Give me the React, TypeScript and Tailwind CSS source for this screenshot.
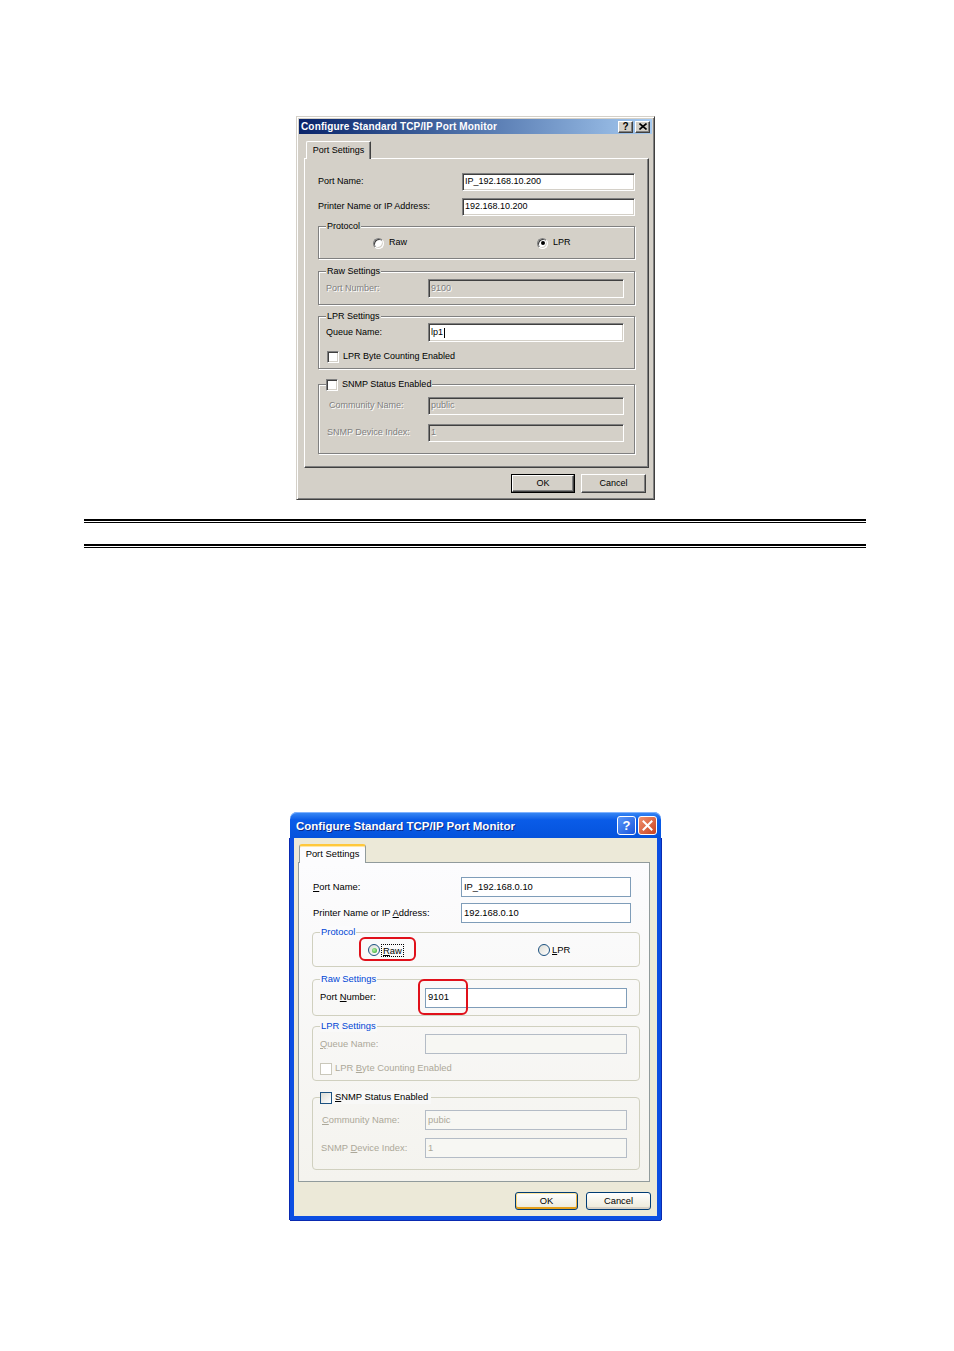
import React from "react";

const raised =
  "border border-t-white border-l-white border-r-[#404040] border-b-[#404040] shadow-[inset_-1px_-1px_0_#808080,inset_1px_1px_0_#d4d0c8]";
const sunken =
  "border border-t-[#808080] border-l-[#808080] border-r-white border-b-white shadow-[inset_1px_1px_0_#404040,inset_-1px_-1px_0_#d4d0c8]";
const etched = "border border-[#808080] shadow-[inset_1px_1px_0_#fff,1px_1px_0_#fff]";
const disabledTxt = "text-[#808080] [text-shadow:1px_1px_0_#fff]";

function ClassicRadio({ checked }: { checked?: boolean }) {
  return (
    <span className="w-[11px] h-[11px] rounded-full bg-white border border-t-[#808080] border-l-[#808080] border-r-white border-b-white shadow-[inset_1px_1px_0_#404040,inset_-1px_-1px_0_#d4d0c8] flex items-center justify-center shrink-0">
      {checked && <span className="w-[4px] h-[4px] rounded-full bg-black" />}
    </span>
  );
}

function ClassicCheck() {
  return <span className={`w-[12px] h-[12px] bg-white shrink-0 ${sunken}`} />;
}

function ClassicDialog() {
  return (
    <div
      className={`w-[359px] h-[384px] bg-[#d4d0c8] p-[2px] flex flex-col border border-t-[#d4d0c8] border-l-[#d4d0c8] border-r-[#404040] border-b-[#404040] shadow-[inset_1px_1px_0_#fff,inset_-1px_-1px_0_#808080] text-[9px] text-black`}
    >
      {/* title bar */}
      <div className="h-[15px] bg-linear-to-r from-[#0a246a] to-[#a6caf0] flex items-center pl-[2px] pr-[2px]">
        <span className="text-white font-bold text-[10px] tracking-[0.15px] leading-none">
          Configure Standard TCP/IP Port Monitor
        </span>
        <div className="ml-auto flex items-center gap-[2px]">
          <span className={`w-[15px] h-[12px] bg-[#d4d0c8] flex items-center justify-center text-[10px] font-bold leading-none ${raised}`}>
            ?
          </span>
          <span className={`w-[15px] h-[12px] bg-[#d4d0c8] flex items-center justify-center ${raised}`}>
            <svg width="8" height="7" viewBox="0 0 8 7">
              <path d="M0.5 0.5 L7.5 6.5 M7.5 0.5 L0.5 6.5" stroke="#000" strokeWidth="1.6" />
            </svg>
          </span>
        </div>
      </div>

      {/* tab */}
      <div className="flex pl-[7px] mt-[7px] relative z-10">
        <div className="w-[65px] h-[18px] -mb-px bg-[#d4d0c8] border-t border-l border-t-white border-l-white border-r border-r-[#404040] shadow-[inset_-1px_0_0_#808080] rounded-tl-[2px] rounded-tr-[1px] flex items-center justify-center">
          Port Settings
        </div>
      </div>

      {/* panel */}
      <div className="ml-[5px] w-[345px] h-[310px] border border-t-white border-l-white border-r-[#404040] border-b-[#404040] shadow-[inset_-1px_-1px_0_#808080] pl-[13px] pt-[14px] flex flex-col">
        <div className="flex items-center h-[18px]">
          <span className="w-[144px]">Port Name:</span>
          <span className={`w-[173px] h-[18px] bg-white flex items-center pl-[2px] ${sunken}`}>IP_192.168.10.200</span>
        </div>
        <div className="flex items-center h-[18px] mt-[7px]">
          <span className="w-[144px]">Printer Name or IP Address:</span>
          <span className={`w-[173px] h-[18px] bg-white flex items-center pl-[2px] ${sunken}`}>192.168.10.200</span>
        </div>

        {/* Protocol */}
        <div className={`relative w-[317px] h-[33px] mt-[10px] ${etched}`}>
          <span className="absolute left-[7px] -top-[7px] px-[1px] bg-[#d4d0c8] leading-[12px]">Protocol</span>
          <div className="flex items-center h-full pl-[54px] pt-[1px]">
            <div className="w-[164px] flex items-center gap-[5px]">
              <ClassicRadio />
              <span>Raw</span>
            </div>
            <div className="flex items-center gap-[5px]">
              <ClassicRadio checked />
              <span>LPR</span>
            </div>
          </div>
        </div>

        {/* Raw settings */}
        <div className={`relative w-[317px] h-[34px] mt-[12px] ${etched}`}>
          <span className="absolute left-[7px] -top-[7px] px-[1px] bg-[#d4d0c8] leading-[12px]">Raw Settings</span>
          <div className="flex items-center h-full pl-[7px] pt-[1px]">
            <span className={`w-[102px] ${disabledTxt}`}>Port Number:</span>
            <span className={`w-[196px] h-[19px] bg-[#d4d0c8] flex items-center pl-[2px] ${sunken} ${disabledTxt}`}>9100</span>
          </div>
        </div>

        {/* LPR settings */}
        <div className={`relative w-[317px] h-[53px] mt-[11px] ${etched}`}>
          <span className="absolute left-[7px] -top-[7px] px-[1px] bg-[#d4d0c8] leading-[12px]">LPR Settings</span>
          <div className="flex flex-col pl-[7px] pt-[6px]">
            <div className="flex items-center h-[19px]">
              <span className="w-[102px]">Queue Name:</span>
              <span className={`w-[196px] h-[19px] bg-white flex items-center pl-[2px] ${sunken}`}>
                lp1<span className="ml-[1px] w-px h-[10px] bg-black" />
              </span>
            </div>
            <div className="flex items-center gap-[4px] mt-[8px] h-[13px] pl-[1px]">
              <ClassicCheck />
              <span>LPR Byte Counting Enabled</span>
            </div>
          </div>
        </div>

        {/* SNMP */}
        <div className={`relative w-[317px] h-[70px] mt-[15px] ${etched}`}>
          <span className="absolute left-[7px] -top-[7px] pr-[1px] bg-[#d4d0c8] flex items-center gap-[4px] h-[13px]">
            <ClassicCheck />
            <span>SNMP Status Enabled</span>
          </span>
          <div className="flex flex-col pl-[7px] pt-[12px]">
            <div className="flex items-center h-[18px]">
              <span className={`w-[102px] pl-[3px] ${disabledTxt}`}>Community Name:</span>
              <span className={`w-[196px] h-[18px] bg-[#d4d0c8] flex items-center pl-[2px] ${sunken} ${disabledTxt}`}>public</span>
            </div>
            <div className="flex items-center h-[18px] mt-[9px]">
              <span className={`w-[102px] pl-[1px] ${disabledTxt}`}>SNMP Device Index:</span>
              <span className={`w-[196px] h-[18px] bg-[#d4d0c8] flex items-center pl-[2px] ${sunken} ${disabledTxt}`}>1</span>
            </div>
          </div>
        </div>
      </div>

      {/* buttons */}
      <div className="flex justify-end gap-[6px] mt-[6px] pr-[6px]">
        <div className="border border-black">
          <div className={`w-[62px] h-[17px] bg-[#d4d0c8] flex items-center justify-center ${raised}`}>OK</div>
        </div>
        <div className={`w-[65px] h-[19px] bg-[#d4d0c8] flex items-center justify-center ${raised}`}>Cancel</div>
      </div>
    </div>
  );
}

function DoubleLine() {
  return (
    <div className="ml-[84px] w-[782px]">
      <div className="h-[2px] bg-black" />
      <div className="h-px mt-px bg-black" />
    </div>
  );
}

const xpDis = "text-[#aca899]";
const U = ({ children }: { children: React.ReactNode }) => <span className="underline">{children}</span>;

function XPRadio({ checked }: { checked?: boolean }) {
  return (
    <span className="w-[12px] h-[12px] rounded-full border border-[#1c5180] bg-linear-to-br from-[#dcdcd5] to-white flex items-center justify-center shrink-0">
      {checked && (
        <span className="w-[5px] h-[5px] rounded-full bg-[radial-gradient(circle_at_40%_40%,#b6f1a6,#21a121)]" />
      )}
    </span>
  );
}

function XPCheck({ disabled }: { disabled?: boolean }) {
  return disabled ? (
    <span className="w-[12px] h-[12px] border border-[#cac8bb] bg-white shrink-0" />
  ) : (
    <span className="w-[12px] h-[12px] border border-[#1c5180] bg-linear-to-br from-[#dcdcd5] to-white shrink-0" />
  );
}

const xpGroup = "relative w-[328px] border border-[#d0d0bf] rounded-[4px]";
const xpInput = "bg-white border border-[#7f9db9] flex items-center pl-[2px]";
const xpInputDis = "bg-[#f7f7f3] border border-[#b4bcc6] flex items-center pl-[2px] text-[#aca899]";

function XPDialog() {
  return (
    <div className="w-[371px] h-[408px] flex flex-col text-[9.4px] text-black">
      {/* title */}
      <div className="h-[26px] rounded-t-[7px] bg-linear-to-b from-[#3b8bf5] via-[#0a5ce8] via-30% to-[#0553dc] flex items-center pl-[6px] pr-[4px] shadow-[inset_0_1px_0_#7fb2ff]">
        <span className="text-white font-bold text-[11.5px] leading-none pt-[3px] [text-shadow:1px_1px_0_#0a2a8a]">
          Configure Standard TCP/IP Port Monitor
        </span>
        <div className="ml-auto flex items-center gap-[2px] pt-[1px]">
          <span className="w-[19px] h-[19px] rounded-[3px] border border-white bg-linear-to-br from-[#5a96f8] to-[#1a54dc] flex items-center justify-center text-white font-bold text-[13px] leading-none">
            ?
          </span>
          <span className="w-[19px] h-[19px] rounded-[3px] border border-white bg-linear-to-br from-[#f0906c] to-[#c8401e] flex items-center justify-center">
            <svg width="11" height="11" viewBox="0 0 11 11">
              <path d="M1.5 1.5 L9.5 9.5 M9.5 1.5 L1.5 9.5" stroke="#fff" strokeWidth="2" strokeLinecap="square" />
            </svg>
          </span>
        </div>
      </div>

      {/* body */}
      <div className="flex-1 bg-[#ece9d8] border-x-[4px] border-b-[4px] border-[#0b4ee2] shadow-[-1px_0_0_#0a2ab0,1px_0_0_#0a2ab0,0_1px_0_#0a2ab0] flex flex-col pt-[6px]">
        <div className="flex pl-[5px] relative z-10">
          <div className="w-[67px] h-[19px] -mb-px bg-[#fcfcfe] border-x border-[#919b9c] rounded-t-[3px] border-t-[2px] border-t-[#ffc83c] shadow-[inset_0_1px_0_#ffe7a2] flex items-center justify-center">
            Port Settings
          </div>
        </div>

        <div className="ml-[4px] w-[352px] h-[320px] border border-[#919b9c] bg-linear-to-b from-[#fcfcfe] to-[#f4f3ee] pl-[13px] pt-[14px] flex flex-col">
          <div className="flex items-center h-[20px] pl-[1px]">
            <span className="w-[148px]">
              <U>P</U>ort Name:
            </span>
            <span className={`w-[170px] h-[20px] ${xpInput}`}>IP_192.168.0.10</span>
          </div>
          <div className="flex items-center h-[20px] pl-[1px] mt-[6px]">
            <span className="w-[148px]">
              Printer Name or IP <U>A</U>ddress:
            </span>
            <span className={`w-[170px] h-[20px] ${xpInput}`}>192.168.0.10</span>
          </div>

          {/* Protocol */}
          <div className={`${xpGroup} h-[35px] mt-[9px]`}>
            <span className="absolute left-[7px] -top-[7px] px-[1px] bg-[#fbfbfc] text-[#0046d5] leading-[12px]">Protocol</span>
            <div className="flex items-center h-full pl-[55px] pt-[1px]">
              <div className="w-[170px] flex items-center gap-[2px]">
                <XPRadio checked />
                <span className="outline outline-1 outline-dotted outline-black px-[1px] leading-[11px]">
                  <U>R</U>aw
                </span>
              </div>
              <div className="flex items-center gap-[2px]">
                <XPRadio />
                <span>
                  <U>L</U>PR
                </span>
              </div>
            </div>
            <span className="absolute left-[46px] top-[4px] w-[57px] h-[24px] rounded-[6px] border-2 border-[#e0101a] pointer-events-none" />
          </div>

          {/* Raw settings */}
          <div className={`${xpGroup} h-[37px] mt-[12px]`}>
            <span className="absolute left-[7px] -top-[7px] px-[1px] bg-[#fafafb] text-[#0046d5] leading-[12px]">Raw Settings</span>
            <div className="flex items-center h-full pl-[7px]">
              <span className="w-[105px]">
                Port <U>N</U>umber:
              </span>
              <span className={`w-[202px] h-[20px] ${xpInput}`}>9101</span>
            </div>
            <span className="absolute left-[105px] -top-[1px] w-[50px] h-[36px] rounded-[6px] border-2 border-[#e0101a] pointer-events-none" />
          </div>

          {/* LPR settings */}
          <div className={`${xpGroup} h-[55px] mt-[10px]`}>
            <span className="absolute left-[7px] -top-[7px] px-[1px] bg-[#f9f9f9] text-[#0046d5] leading-[12px]">LPR Settings</span>
            <div className="flex flex-col pl-[7px] pt-[7px]">
              <div className="flex items-center h-[20px]">
                <span className={`w-[105px] ${xpDis}`}>
                  <U>Q</U>ueue Name:
                </span>
                <span className={`w-[202px] h-[20px] ${xpInputDis}`} />
              </div>
              <div className="flex items-center gap-[3px] mt-[8px] h-[13px]">
                <XPCheck disabled />
                <span className={xpDis}>
                  LPR <U>B</U>yte Counting Enabled
                </span>
              </div>
            </div>
          </div>

          {/* SNMP */}
          <div className={`${xpGroup} h-[73px] mt-[16px]`}>
            <span className="absolute left-[7px] -top-[7px] pr-[3px] bg-[#f8f8f7] flex items-center gap-[3px] h-[13px]">
              <XPCheck />
              <span>
                <U>S</U>NMP Status Enabled
              </span>
            </span>
            <div className="flex flex-col pl-[7px] pt-[12px]">
              <div className="flex items-center h-[20px]">
                <span className={`w-[105px] pl-[2px] ${xpDis}`}>
                  <U>C</U>ommunity Name:
                </span>
                <span className={`w-[202px] h-[20px] ${xpInputDis}`}>pubic</span>
              </div>
              <div className="flex items-center h-[20px] mt-[8px]">
                <span className={`w-[105px] pl-[1px] ${xpDis}`}>
                  SNMP <U>D</U>evice Index:
                </span>
                <span className={`w-[202px] h-[20px] ${xpInputDis}`}>1</span>
              </div>
            </div>
          </div>
        </div>

        <div className="flex justify-end gap-[8px] mt-[10px] pr-[6px]">
          <div className="w-[63px] h-[18px] rounded-[3px] border border-[#003c74] bg-linear-to-b from-white to-[#ece9d8] shadow-[inset_0_1px_0_#ffe7a2,inset_0_-2px_0_#e5a01a,inset_1px_0_0_#fbd57a,inset_-1px_0_0_#f2b33c] flex items-center justify-center">
            OK
          </div>
          <div className="w-[65px] h-[18px] rounded-[3px] border border-[#003c74] bg-linear-to-b from-white to-[#ece9d8] shadow-[inset_0_-2px_0_#d6d0c5] flex items-center justify-center">
            Cancel
          </div>
        </div>
      </div>
    </div>
  );
}

export default function App() {
  return (
    <div className="w-[954px] h-[1351px] bg-white overflow-hidden [font-family:'Liberation_Sans',Arial,sans-serif]">
      <div className="pt-[116px] pl-[296px]">
        <ClassicDialog />
      </div>
      <div className="mt-[19px]">
        <DoubleLine />
      </div>
      <div className="mt-[21px]">
        <DoubleLine />
      </div>
      <div className="ml-[290px] mt-[264px]">
        <XPDialog />
      </div>
    </div>
  );
}
